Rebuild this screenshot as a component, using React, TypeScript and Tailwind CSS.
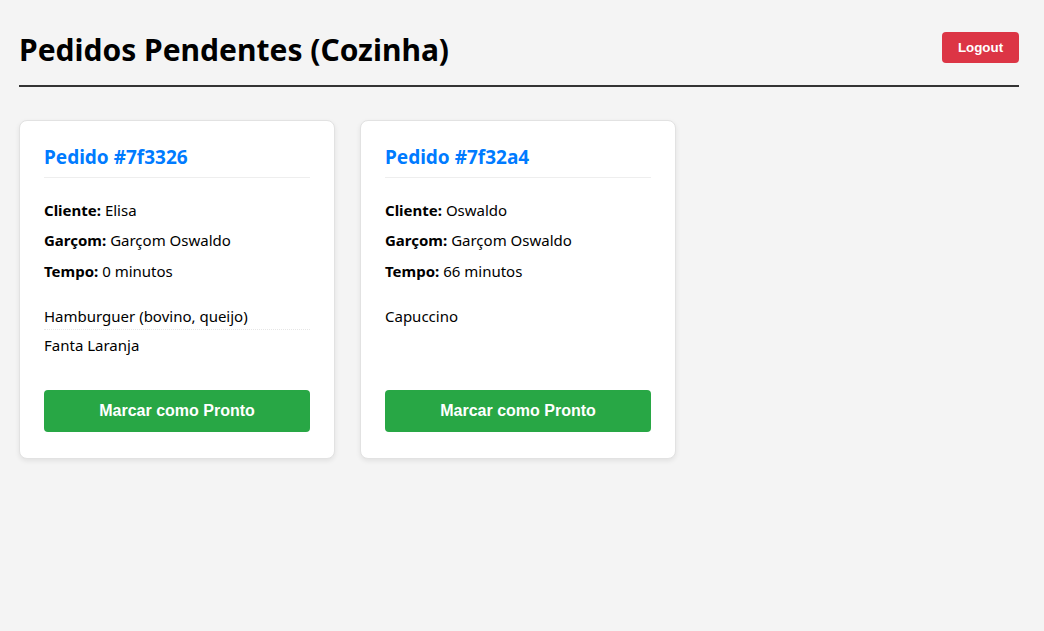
import React from "react";

type Order = {
  id: string;
  cliente: string;
  garcom: string;
  tempo: string;
  itens: string[];
};

const orders: Order[] = [
  {
    id: "7f3326",
    cliente: "Elisa",
    garcom: "Garçom Oswaldo",
    tempo: "0 minutos",
    itens: ["Hamburguer (bovino, queijo)", "Fanta Laranja"],
  },
  {
    id: "7f32a4",
    cliente: "Oswaldo",
    garcom: "Garçom Oswaldo",
    tempo: "66 minutos",
    itens: ["Capuccino"],
  },
];

function Card({ o }: { o: Order }) {
  return (
    <div className="w-[316px] bg-white border border-[#e2e2e2] rounded-[8px] shadow-[0_2px_5px_rgba(0,0,0,0.08)] pl-[24px] pr-6 pt-6 pb-[26px] flex flex-col">
      <h3 className="text-[19px] leading-[24px] font-bold text-[#007bff] pb-[8px] border-b border-[#eeeeee]">
        Pedido #{o.id}
      </h3>
      <div className="mt-[13px] flex flex-col">
        <p className="leading-[22px] mt-[8px] mb-[8px]">
          <strong>Cliente:</strong> {o.cliente}
        </p>
        <p className="leading-[22px] mb-[9px]">
          <strong>Garçom:</strong> {o.garcom}
        </p>
        <p className="leading-[22px]">
          <strong>Tempo:</strong> {o.tempo}
        </p>
      </div>
      <ul className="mt-[23px] h-[64px]">
        {o.itens.map((it, i) => (
          <li
            key={i}
            className={
              "leading-[22px] pb-[2px] " +
              (i < o.itens.length - 1 ? "border-b border-dotted border-[#e6e6e6] mb-[4px]" : "")
            }
          >
            {it}
          </li>
        ))}
      </ul>
      <button className="mt-[21px] h-[42px] w-full bg-[#28a745] rounded-[4px] text-white font-bold text-[16px] font-['Liberation_Sans',Arial,sans-serif]">
        Marcar como Pronto
      </button>
    </div>
  );
}

export default function App() {
  return (
    <div className="min-h-[631px] bg-[#f4f4f4] text-black font-['Noto_Sans',sans-serif] text-[15px] pl-[19px] pt-[28px]">
      <div className="w-[1000px]">
        <header className="flex items-start justify-between pb-[13px] border-b-2 border-[#333333]">
          <h1 className="text-[30px] leading-[44px] font-bold">Pedidos Pendentes (Cozinha)</h1>
          <button className="mt-[4px] h-[31px] w-[77px] bg-[#dc3545] text-white font-bold text-[13.33px] rounded-[4px] font-['Liberation_Sans',Arial,sans-serif]">
            Logout
          </button>
        </header>
        <div className="mt-[33px] flex gap-[25px]">
          {orders.map((o) => (
            <Card key={o.id} o={o} />
          ))}
        </div>
      </div>
    </div>
  );
}
